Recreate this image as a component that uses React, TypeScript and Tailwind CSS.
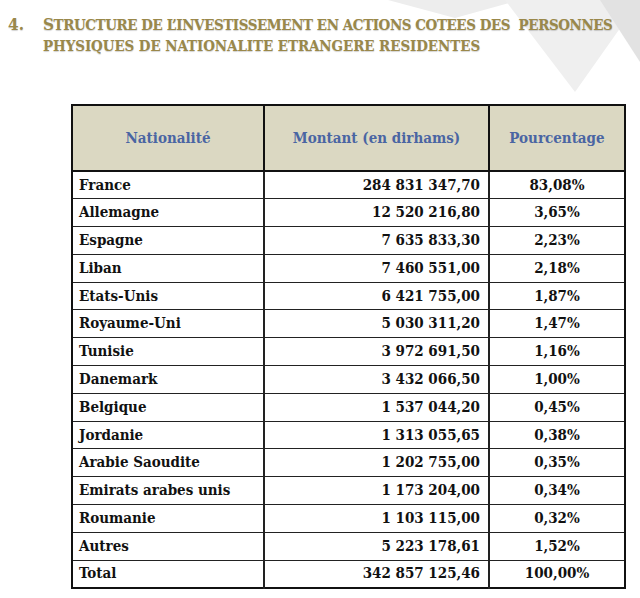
import React from 'react';

const rows: [string, string, string][] = [
  ['France', '284 831 347,70', '83,08%'],
  ['Allemagne', '12 520 216,80', '3,65%'],
  ['Espagne', '7 635 833,30', '2,23%'],
  ['Liban', '7 460 551,00', '2,18%'],
  ['Etats-Unis', '6 421 755,00', '1,87%'],
  ['Royaume-Uni', '5 030 311,20', '1,47%'],
  ['Tunisie', '3 972 691,50', '1,16%'],
  ['Danemark', '3 432 066,50', '1,00%'],
  ['Belgique', '1 537 044,20', '0,45%'],
  ['Jordanie', '1 313 055,65', '0,38%'],
  ['Arabie Saoudite', '1 202 755,00', '0,35%'],
  ['Emirats arabes unis', '1 173 204,00', '0,34%'],
  ['Roumanie', '1 103 115,00', '0,32%'],
  ['Autres', '5 223 178,61', '1,52%'],
  ['Total', '342 857 125,46', '100,00%'],
];

const Watermark = () => (
  <svg className="absolute top-0 right-0" width="260" height="100" viewBox="380 0 260 100">
    <polygon points="388,0 520,0 455,18" fill="#ededed" />
    <polygon points="505,0 640,0 575,92" fill="#efefef" />
    <polygon points="600,0 640,0 640,62" fill="#e2e2e2" />
  </svg>
);

export default function App() {
  return (
    <div className="relative w-[640px] h-[598px] bg-white overflow-hidden font-['DejaVu_Serif_Condensed','DejaVu_Serif',serif]">
      <Watermark />

      <div className="relative flex pt-[14px] pl-[8px] text-[#9a884a] font-bold [text-shadow:0_1px_1px_rgba(0,0,0,0.18)]">
        <div className="w-[35px] text-[17px] leading-[20px]">4.</div>
        <h1 className="text-[15px] leading-[21px]">
          <span className="tracking-[-0.45px]">
            <span className="text-[17px]">S</span>TRUCTURE DE L’INVESTISSEMENT EN ACTIONS COTEES DES &nbsp;PERSONNES
          </span>
          <br />
          <span className="tracking-[-0.1px]">PHYSIQUES DE NATIONALITE ETRANGERE RESIDENTES</span>
        </h1>
      </div>

      <table className="absolute left-[71px] top-[104px] w-[555px] border-collapse border-2 border-[#111] text-[15px] font-bold text-[#111]">
        <thead>
          <tr className="h-[66px] bg-[#dbd8c2] text-[#4a65a3]">
            <th className="w-[192px] border-2 border-[#111] font-bold">Nationalité</th>
            <th className="w-[225px] border-2 border-[#111] font-bold">Montant (en dirhams)</th>
            <th className="border-2 border-[#111] font-bold">Pourcentage</th>
          </tr>
        </thead>
        <tbody>
          {rows.map(([name, amount, pct]) => (
            <tr key={name} className="h-[27.8px]">
              <td className="border border-[#222] border-r-2 pl-[6px] leading-none">{name}</td>
              <td className="border border-[#222] border-r-2 pr-[8px] text-right leading-none">{amount}</td>
              <td className="border border-[#222] text-center leading-none">{pct}</td>
            </tr>
          ))}
        </tbody>
      </table>
    </div>
  );
}
